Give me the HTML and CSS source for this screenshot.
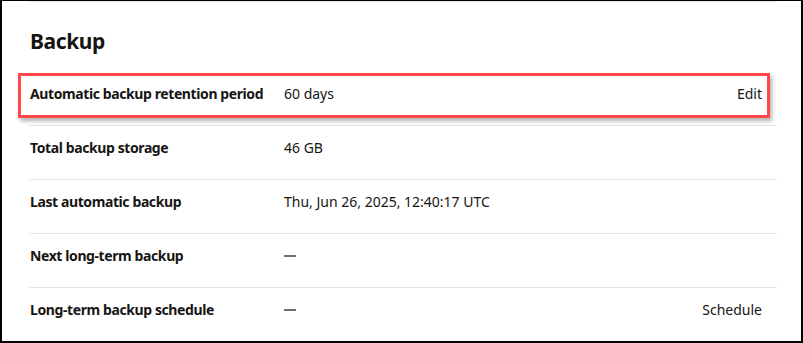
FILE: index.html
```html
<!DOCTYPE html>
<html lang="en">
<head>
<meta charset="utf-8">
<title>Backup</title>
<link rel="stylesheet" href="styles.css">
</head>
<body>
<div class="frame">
  <div class="top-rule"></div>
  <section class="panel">
    <h2 class="title">Backup</h2>
    <div class="rows">
      <div class="row row-first">
        <div class="label">Automatic backup retention period</div>
        <div class="value">60 days</div>
        <div class="action">Edit</div>
        <div class="highlight"></div>
      </div>
      <div class="row">
        <div class="label">Total backup storage</div>
        <div class="value">46 GB</div>
        <div class="action"></div>
      </div>
      <div class="row">
        <div class="label">Last automatic backup</div>
        <div class="value">Thu, Jun 26, 2025, 12:40:17 UTC</div>
        <div class="action"></div>
      </div>
      <div class="row">
        <div class="label">Next long-term backup</div>
        <div class="value"><span class="dash"></span></div>
        <div class="action"></div>
      </div>
      <div class="row">
        <div class="label">Long-term backup schedule</div>
        <div class="value"><span class="dash"></span></div>
        <div class="action">Schedule</div>
      </div>
    </div>
  </section>
</div>
</body>
</html>
```
FILE: styles.css
```css
html, body {
  margin: 0;
  padding: 0;
  background: #ffffff;
}
body {
  font-family: "Noto Sans", "Open Sans", sans-serif;
  color: #161513;
}
.frame {
  box-sizing: border-box;
  width: 803px;
  height: 343px;
  border-style: solid;
  border-color: #000000;
  border-width: 1px 2px 2px 2px;
  background: #ffffff;
  overflow: hidden;
}
.top-rule {
  height: 1px;
  margin: 0 24px 0 27px;
  background: #e4e4e4;
}
.panel {
  padding: 0 24px 0 27px;
}
.title {
  margin: 0;
  padding: 24px 0 16px 1px;
  font-size: 21px;
  line-height: 30px;
  font-weight: 700;
  letter-spacing: -0.4px;
}
.rows {
  display: flex;
  flex-direction: column;
}
.row {
  position: relative;
  display: grid;
  grid-template-columns: 254px 1fr auto;
  align-items: start;
  padding: 12px 15px 21px 1px;
  font-size: 14px;
  line-height: 20px;
  border-bottom: 1px solid #e4e4e4;
}
.row:last-child {
  border-bottom: none;
}
.label {
  font-weight: 700;
  letter-spacing: -0.4px;
}
.value {
  font-weight: 400;
}
.action {
  font-weight: 400;
}
.dash {
  display: inline-block;
  width: 12px;
  height: 2px;
  background: #6f6f6f;
  vertical-align: middle;
  margin-top: -2px;
}
.highlight {
  position: absolute;
  left: -11px;
  top: 1px;
  width: 752px;
  height: 45px;
  box-sizing: border-box;
  border: 3px solid #ff4848;
  box-shadow: 2px 3px 4px rgba(0, 0, 0, 0.3);
  pointer-events: none;
}
```
